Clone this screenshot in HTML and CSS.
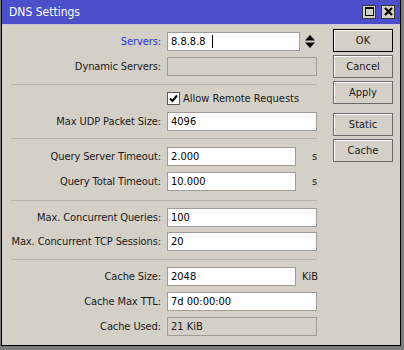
FILE: index.html
```html
<!DOCTYPE html>
<html lang="en">
<head>
    <meta charset="UTF-8">
    <title>DNS Settings</title>
    <link rel="stylesheet" href="styles.css">
</head>
<body>
    <div class="window">
        <div class="titlebar">
            <span class="title">DNS Settings</span>
            <div class="title-buttons">
                <span class="tbtn"><span class="max-box"></span></span>
                <span class="tbtn">
                    <svg width="9" height="9" viewBox="0 0 9 9"><path d="M1 1 L8 8 M8 1 L1 8" stroke="#000" stroke-width="2.2"/></svg>
                </span>
            </div>
        </div>

        <div class="content">
            <div class="form">
                <div class="row">
                    <label class="label accent">Servers:</label>
                    <div class="field servers">8.8.8.8<span class="caret"></span></div>
                    <svg class="spinner" width="10" height="13" viewBox="0 0 10 13">
                        <path d="M5 0 L10 5.5 L0 5.5 Z M0 7.5 L10 7.5 L5 13 Z" fill="#000"/>
                    </svg>
                </div>
                <div class="row">
                    <label class="label">Dynamic Servers:</label>
                    <div class="field long disabled"></div>
                </div>

                <div class="sep first"></div>

                <div class="row check-row">
                    <span></span>
                    <div class="check-wrap">
                        <span class="checkbox">
                            <svg width="9" height="9" viewBox="0 0 9 9"><path d="M1 4.5 L3.5 7 L8 1.5" fill="none" stroke="#000" stroke-width="2"/></svg>
                        </span>
                        <span>Allow Remote Requests</span>
                    </div>
                </div>
                <div class="row">
                    <label class="label">Max UDP Packet Size:</label>
                    <div class="field long">4096</div>
                </div>

                <div class="sep second"></div>

                <div class="row">
                    <label class="label">Query Server Timeout:</label>
                    <div class="field short">2.000</div>
                    <span class="unit">s</span>
                </div>
                <div class="row">
                    <label class="label">Query Total Timeout:</label>
                    <div class="field short">10.000</div>
                    <span class="unit">s</span>
                </div>

                <div class="sep third"></div>

                <div class="row tight">
                    <label class="label">Max. Concurrent Queries:</label>
                    <div class="field long">100</div>
                </div>
                <div class="row">
                    <label class="label">Max. Concurrent TCP Sessions:</label>
                    <div class="field long">20</div>
                </div>

                <div class="sep"></div>

                <div class="row">
                    <label class="label">Cache Size:</label>
                    <div class="field short">2048</div>
                    <span class="unit kib">KiB</span>
                </div>
                <div class="row">
                    <label class="label">Cache Max TTL:</label>
                    <div class="field long">7d 00:00:00</div>
                </div>
                <div class="row">
                    <label class="label">Cache Used:</label>
                    <div class="field long disabled">21 KiB</div>
                </div>
            </div>

            <div class="buttons">
                <button class="btn default">OK</button>
                <button class="btn">Cancel</button>
                <button class="btn">Apply</button>
                <button class="btn spaced">Static</button>
                <button class="btn">Cache</button>
            </div>
        </div>
    </div>
</body>
</html>
```

FILE: styles.css
```css
body {
    margin: 0;
    background-color: #7c7c7c;
    font-family: 'DejaVu Sans Condensed', 'DejaVu Sans', sans-serif;
    font-size: 11px;
    color: #1a1a1a;
}

.window {
    width: 398px;
    height: 345px;
    margin-left: 1px;
    background-color: #d4d0c8;
    border-left: 1px solid #000;
    border-right: 1px solid #000;
    border-bottom: 1px solid #000;
    display: flex;
    flex-direction: column;
}

.titlebar {
    height: 24px;
    background-color: #4b4fc9;
    border-bottom: 1px solid #c9c6d6;
    display: flex;
    align-items: center;
    justify-content: space-between;
    padding: 0 5px 0 7px;
}

.title {
    color: #ffffff;
    font-size: 12px;
}

.title-buttons {
    display: flex;
    gap: 5px;
    margin-top: -1px;
}

.tbtn {
    width: 12px;
    height: 12px;
    background-color: #d4d0c8;
    border: 1px solid #3a3a3a;
    display: flex;
    align-items: center;
    justify-content: center;
}

.max-box {
    width: 7px;
    height: 6px;
    border: 1px solid #000;
    border-top-width: 2px;
}

.content {
    display: flex;
}

.form {
    width: 318px;
    padding-top: 7px;
    display: flex;
    flex-direction: column;
}

.row {
    display: grid;
    grid-template-columns: 159px auto auto;
    column-gap: 6px;
    align-items: center;
    justify-content: start;
    height: 19px;
    margin-bottom: 6px;
}

.row.tight {
    margin-bottom: 5px;
}

.row.check-row {
    height: 14px;
    margin-bottom: 7px;
}

.label {
    text-align: right;
    letter-spacing: -0.1px;
}

.accent {
    color: #2f2fd8;
}

.field {
    box-sizing: border-box;
    height: 19px;
    background-color: #ffffff;
    border: 1px solid #a09d97;
    padding: 0 3px;
    line-height: 17px;
    color: #000;
    display: flex;
    align-items: center;
}

.field.servers {
    width: 133px;
}

.field.short {
    width: 129px;
}

.field.long {
    width: 150px;
}

.field.disabled {
    background-color: #d4d0c8;
    color: #1a1a1a;
}

.caret {
    width: 1px;
    height: 13px;
    background-color: #000;
    margin-left: 6px;
}

.spinner {
    margin-left: -1px;
}

.unit {
    padding-left: 10px;
}

.unit.kib {
    padding-left: 0;
}

.check-wrap {
    display: flex;
    align-items: center;
    gap: 3px;
}

.checkbox {
    box-sizing: border-box;
    width: 13px;
    height: 13px;
    background-color: #ffffff;
    border: 1px solid #555;
    display: flex;
    align-items: center;
    justify-content: center;
}

.sep {
    height: 0;
    width: 306px;
    margin: 2px 0 7px 9px;
    border-top: 1px solid #b9b5ad;
}

.sep.first {
    margin-bottom: 6px;
}

.sep.second {
    margin-top: 1px;
    margin-bottom: 8px;
}

.sep.third {
    margin-top: 3px;
}

.buttons {
    display: flex;
    flex-direction: column;
    gap: 3px;
    padding-top: 4px;
    margin-left: 13px;
}

.btn {
    box-sizing: border-box;
    width: 60px;
    height: 23px;
    background-color: #d4d0c8;
    border: 1px solid #6a6a6a;
    box-shadow: inset 1px 1px 0 #ffffff;
    font-family: 'DejaVu Sans Condensed', 'DejaVu Sans', sans-serif;
    font-size: 11px;
    color: #1a1a1a;
    padding: 0;
}

.btn.default {
    border: 1px solid #000;
}

.btn.spaced {
    margin-top: 6px;
}
```
